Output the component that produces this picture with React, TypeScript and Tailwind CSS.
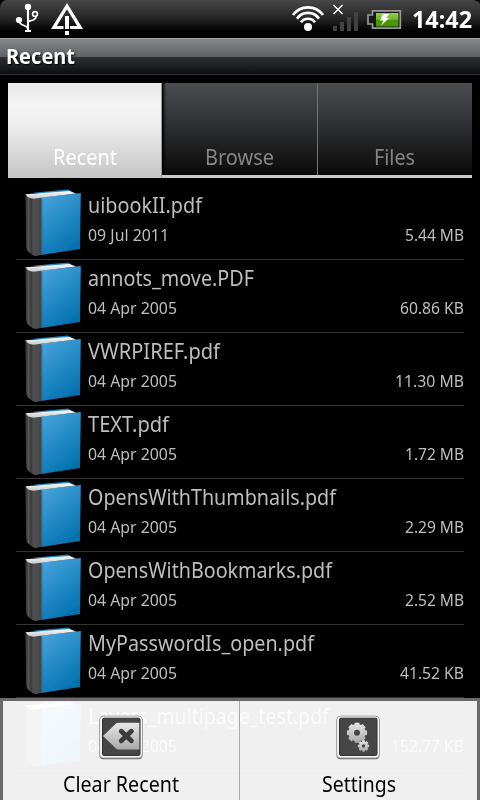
import { useLayoutEffect, useRef } from "react";

const files = [
  { name: "uibookII.pdf", nw: 114, date: "09 Jul 2011", dw: 81, size: "5.44 MB", sw: 59 },
  { name: "annots_move.PDF", nw: 166, date: "04 Apr 2005", dw: 89, size: "60.86 KB", sw: 64 },
  { name: "VWRPIREF.pdf", nw: 132, date: "04 Apr 2005", dw: 89, size: "11.30 MB", sw: 69 },
  { name: "TEXT.pdf", nw: 81, date: "04 Apr 2005", dw: 89, size: "1.72 MB", sw: 59 },
  { name: "OpensWithThumbnails.pdf", nw: 248, date: "04 Apr 2005", dw: 89, size: "2.29 MB", sw: 59 },
  { name: "OpensWithBookmarks.pdf", nw: 244, date: "04 Apr 2005", dw: 89, size: "2.52 MB", sw: 59 },
  { name: "MyPasswordIs_open.pdf", nw: 226, date: "04 Apr 2005", dw: 89, size: "41.52 KB", sw: 64 },
  { name: "Layers_multipage_test.pdf", nw: 241, date: "04 Apr 2005", dw: 89, size: "152.77 KB", sw: 73 },
];

/* Condenses a single line of text to the given advance width. */
function Fit({ text, width, className = "" }: { text: string; width: number; className?: string }) {
  const box = useRef<HTMLSpanElement>(null);
  const inner = useRef<HTMLSpanElement>(null);
  useLayoutEffect(() => {
    if (!box.current || !inner.current) return;
    inner.current.style.transform = "none";
    const natural = inner.current.getBoundingClientRect().width;
    inner.current.style.transform = `scaleX(${width / natural})`;
    box.current.style.width = `${width}px`;
  }, [text, width]);
  return (
    <span ref={box} className={`block whitespace-nowrap ${className}`}>
      <span ref={inner} className="inline-block origin-left">{text}</span>
    </span>
  );
}

function Book() {
  return (
    <svg className="ml-2 h-[72px] w-16 shrink-0" viewBox="24 187 64 72">
      <defs>
        <linearGradient id="cover" x1="0.1" y1="0" x2="0.6" y2="1">
          <stop offset="0" stopColor="#48a4dc" />
          <stop offset="1" stopColor="#0272b0" />
        </linearGradient>
        <linearGradient id="spine" x1="0" y1="0" x2="1" y2="0">
          <stop offset="0" stopColor="#2c2c2c" />
          <stop offset="0.2" stopColor="#555" />
          <stop offset="0.35" stopColor="#383838" />
          <stop offset="0.5" stopColor="#505050" />
          <stop offset="0.9" stopColor="#494949" />
          <stop offset="1" stopColor="#34424c" />
        </linearGradient>
        <linearGradient id="pages" x1="0" y1="0" x2="0" y2="1">
          <stop offset="0" stopColor="#fff" />
          <stop offset="1" stopColor="#c4cbd0" />
        </linearGradient>
        <filter id="edge" x="-10%" y="-10%" width="120%" height="120%">
          <feGaussianBlur stdDeviation="0.75" />
        </filter>
      </defs>
      <g filter="url(#edge)">
        <path d="M33 192.8 L68 189.4 L71.5 191.5 L60 195Z" fill="#2087c2" />
        <path d="M25.3 195 L33 197.8 L41.8 197.8 L41.8 254.8 L36 256 Q33.5 256 31 254 L27.5 251 Q26.2 249.5 26.1 247Z" fill="url(#spine)" />
        <path d="M41.3 197.6 L80.8 193.1 L80 249 L41.3 255Z" fill="url(#cover)" />
        <path d="M25.3 194.2 L69.5 190.9 L76 193.4 L35 198.6 Q31 198.9 28 197.2Z" fill="url(#pages)" />
        <path d="M41.8 199V254.5" stroke="#225f86" strokeWidth="0.8" />
      </g>
    </svg>
  );
}

function StatusBar() {
  return (
    <header className="flex h-[38px] bg-linear-to-b from-[#484848] via-[#242424] via-50% to-black">
      <svg className="h-[38px] w-[402px]" viewBox="0 0 402 38">
        <defs>
          <linearGradient id="charge" x1="0" y1="0" x2="0" y2="1">
            <stop offset="0" stopColor="#90cf48" />
            <stop offset="0.48" stopColor="#6fb825" />
            <stop offset="0.5" stopColor="#499a00" />
            <stop offset="1" stopColor="#459500" />
          </linearGradient>
        </defs>
        <path d="M0 0H6Q1 1 0 7Z" fill="#000" />
        <g fill="none" stroke="#fff">
          <path d="M28 8V31" strokeWidth="2.2" />
          <path d="M19 21C19.5 26 28 25 28 29M28 21.5C31 20.5 36.5 20 36 16.5" strokeWidth="1.8" />
          <circle cx="35" cy="14" r="2.4" strokeWidth="1.7" />
          <path d="M25 31H31" strokeWidth="2" />
        </g>
        <circle cx="28" cy="7" r="3.2" fill="#fff" />
        <circle cx="19" cy="20" r="3.1" fill="#fff" />
        <path fillRule="evenodd" d="M67 3L83 29H70V26H77.2L67 9.3L56.8 26H63.5V29H51Z" fill="#fff" />
        <path d="M65 16H69V29H65ZM65 31H69V35H65Z" fill="#fff" />
        <g fill="none" stroke="#fff" strokeWidth="2.7">
          <path d="M293 15C300.5 4.7 315.5 4.7 323 15" />
          <path d="M297 18.6C302.5 11 313.5 11 319 18.6" />
          <path d="M301 22.4C304 17.5 312 17.5 315 22.4" />
        </g>
        <circle cx="308" cy="27" r="4" fill="#fff" />
        <path d="M333.5 5L342.5 14M342.5 5L333.5 14" stroke="#fff" strokeWidth="1.4" />
        <path d="M333 26H337V31H333ZM340 22H344V31H340ZM347 17H351V31H347ZM354 12H358V31H354Z" fill="#414141" />
        <path d="M372.5 10.8H400.3V28.2H372.5V24H368V15H372.5Z" fill="#181818" stroke="#999" strokeWidth="1.7" />
        <path d="M376 13H398.5V26.5H376Z" fill="url(#charge)" />
        <path d="M383 14H389L386.5 18H389.5L381 25.5L383.5 20.5H380Z" fill="#fff" />
      </svg>
      <Fit text="14:42" width={60} className="ml-[10px] text-[23px] leading-[38px] font-bold text-white" />
      <span className="ml-auto h-[6px] w-[5px] bg-[radial-gradient(circle_at_0_100%,transparent_5px,#000_5.5px)]" />
    </header>
  );
}

function Tab({ label, width, active = false, last = false }: { label: string; width: number; active?: boolean; last?: boolean }) {
  const tone = active
    ? "h-[95px] w-[154px] bg-[linear-gradient(#e9e9e9_0,#ebebeb_8%,#f5f5f5_22%,#efefef_42%,#c5c5c5_100%)] text-white border-r border-[#999]"
    : "h-[92px] bg-linear-to-b from-[#4b4d50] via-[#2c2d2f] via-50% to-[#0a0a0a] text-[#858585]";
  const edge = active ? "" : last ? "w-[154px]" : "w-[156px] border-r border-[#707274] shadow-[inset_4px_0_3px_-2px_#000]";
  return (
    <div className={`flex items-end justify-center ${tone} ${edge}`}>
      <Fit text={label} width={width} className={`text-[22px] leading-[30px] ${active ? "mb-[7px]" : "mb-[4px]"} ${last ? "mr-[2px]" : ""}`} />
    </div>
  );
}

/* Light bevelled frame around a dark tile, shared by the menu icons. */
function Frame() {
  return (
    <>
      <rect x="2.5" y="4" width="43" height="42.3" rx="4" fill="#666" />
      <rect x="2.5" y="3" width="43" height="42" rx="4" fill="#f0f0f0" stroke="#999" strokeWidth="0.8" />
      <rect x="5.5" y="5.2" width="37.5" height="37.2" rx="1.5" fill="#464646" stroke="#2f2f2f" strokeWidth="1" />
    </>
  );
}

function ClearIcon() {
  return (
    <svg className="h-12 w-12" viewBox="0 0 48 48">
      <defs>
        <linearGradient id="silver" x1="0" y1="0" x2="0" y2="1">
          <stop offset="0" stopColor="#e8e8e8" />
          <stop offset="1" stopColor="#a9a9a9" />
        </linearGradient>
      </defs>
      <Frame />
      <path d="M6 23L19 10.5Q20 9.800 21.500 9.800H42.300V36.500H21.500Q20 36.500 19 35.500Z" fill="url(#silver)" />
      <path d="M24.300 18.300L34.300 27.700M34.300 18.300L24.300 27.700" stroke="#3c3c3c" strokeWidth="5" strokeLinecap="round" />
    </svg>
  );
}

/* Outline of a cog with eight square teeth. */
function cog(cx: number, cy: number, outer: number, inner: number) {
  const points: string[] = [];
  for (let i = 0; i < 8; i++) {
    [[-0.3, inner], [-0.22, outer], [0.22, outer], [0.3, inner]].forEach(([da, r]) => {
      const a = (i * Math.PI) / 4 + da;
      points.push(`${(cx + Math.cos(a) * r).toFixed(2)} ${(cy + Math.sin(a) * r).toFixed(2)}`);
    });
  }
  return `M${points.join("L")}Z`;
}

function GearIcon() {
  return (
    <svg className="mr-px h-12 w-12" viewBox="0 0 48 48">
      <Frame />
      <path d={cog(23, 19.7, 10.3, 8.6)} fill="url(#silver)" />
      <circle cx="23" cy="19.7" r="3" fill="#464646" />
      <path d={cog(29.5, 33, 5.8, 4.5)} fill="url(#silver)" />
      <circle cx="29.5" cy="33" r="1.7" fill="#464646" />
    </svg>
  );
}

export default function App() {
  return (
    <div className="relative flex h-[800px] w-[480px] flex-col overflow-hidden bg-black font-['Noto_Sans',sans-serif]">
      <StatusBar />
      <div className="h-[37px] border-t border-b border-t-[#a9a9a9] border-b-[#303132] bg-[linear-gradient(#85878b_0,#5e6063_18px,#303133_18px,#0c0d0e_100%)] pl-[6px]">
        <Fit text="Recent" width={69} className="text-[21px] leading-[35px] font-bold text-white text-shadow-[1px_1px_2px_#000]" />
      </div>
      <nav className="mx-2 mt-2 flex h-[95px] items-start border-b-3 border-[#cbcbcb]">
        <Tab label="Recent" width={64} active />
        <Tab label="Browse" width={69} />
        <Tab label="Files" width={41} last />
      </nav>
      <ul className="mx-4 mt-[9px]">
        {files.map((f) => (
          <li key={f.name} className="flex h-[73px] border-b border-[#333]">
            <Book />
            <div className="flex-1 pt-[2px] text-[#bebebe]">
              <Fit text={f.name} width={f.nw} className="text-[22px] leading-[30px]" />
              <div className="mt-1 flex justify-between text-[17px] leading-6">
                <Fit text={f.date} width={f.dw} />
                <Fit text={f.size} width={f.sw} />
              </div>
            </div>
          </li>
        ))}
      </ul>
      <div className="absolute inset-x-0 bottom-0 flex h-[102px] border-x-3 border-t-3 border-[#6b6b6b] bg-white/94 bg-clip-padding">
        <div className="flex w-[237px] flex-col items-center border-r border-[#aaa] pt-3">
          <ClearIcon />
          <Fit text="Clear Recent" width={116} className="mt-[7px] text-[22px] leading-[30px] text-black" />
        </div>
        <div className="flex flex-1 flex-col items-center pt-3">
          <GearIcon />
          <Fit text="Settings" width={74} className="mt-[7px] text-[22px] leading-[30px] text-black" />
        </div>
      </div>
    </div>
  );
}
